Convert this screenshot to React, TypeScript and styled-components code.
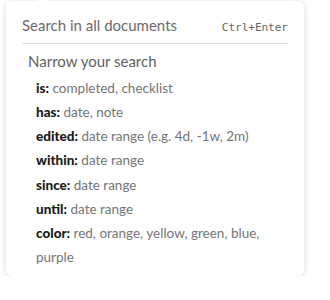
import React from "react";
import styled, {createGlobalStyle} from "styled-components";

const GlobalStyle = createGlobalStyle`
  body {
    margin: 0;
    background: #ffffff;
    font-family: Lato, "Open Sans", sans-serif;
  }
`

type Filter = {
    key: string
    value: string
}

const filters: Filter[] = [
    {key: 'is:', value: 'completed, checklist'},
    {key: 'has:', value: 'date, note'},
    {key: 'edited:', value: 'date range (e.g. 4d, -1w, 2m)'},
    {key: 'within:', value: 'date range'},
    {key: 'since:', value: 'date range'},
    {key: 'until:', value: 'date range'},
    {key: 'color:', value: 'red, orange, yellow, green, blue, purple'},
]

export default function App() {
    return (
        <>
            <GlobalStyle/>
            <Popover>
                <Caret/>
                <Header>
                    <HeaderTitle>Search in all documents</HeaderTitle>
                    <Shortcut>Ctrl+Enter</Shortcut>
                </Header>
                <Section>
                    <SectionTitle>Narrow your search</SectionTitle>
                    <FilterList>
                        {filters.map(f => (
                            <FilterItem key={f.key}>
                                <FilterKey>{f.key}</FilterKey> {f.value}
                            </FilterItem>
                        ))}
                    </FilterList>
                </Section>
            </Popover>
        </>
    )
}

const Popover = styled.div`
  position: relative;
  margin: 1px 0 0 6px;
  width: 298px;
  background: #fff;
  border-radius: 6px;
  box-shadow: 0 1px 6px rgba(0, 0, 0, 0.16);
  padding-bottom: 7px;
`

const Caret = styled.div`
  position: absolute;
  top: -5px;
  left: 30px;
  width: 0;
  height: 0;
  border-left: 6px solid transparent;
  border-right: 6px solid transparent;
  border-bottom: 6px solid #fff;
`

const Header = styled.div`
  display: flex;
  align-items: center;
  justify-content: space-between;
  margin: 0 16px;
  height: 42px;
  border-bottom: 1px solid #dddddd;
`

const HeaderTitle = styled.span`
  font-size: 15px;
  color: #6b6b6b;
  padding-top: 6px;
`

const Shortcut = styled.span`
  font-family: "DejaVu Sans Mono", "Liberation Mono", monospace;
  font-size: 11px;
  color: #666;
  padding-top: 10px;
`

const Section = styled.div`
  padding: 6px 16px 0 22px;
`

const SectionTitle = styled.div`
  font-size: 15px;
  color: #5f5f5f;
  line-height: 22px;
  margin-bottom: 4px;
`

const FilterList = styled.div`
  padding-left: 8px;
  padding-right: 16px;
`

const FilterItem = styled.div`
  font-size: 13.5px;
  line-height: 24.15px;
  color: #757575;
`

const FilterKey = styled.b`
  font-weight: 900;
  color: #1a1a1a;
`
